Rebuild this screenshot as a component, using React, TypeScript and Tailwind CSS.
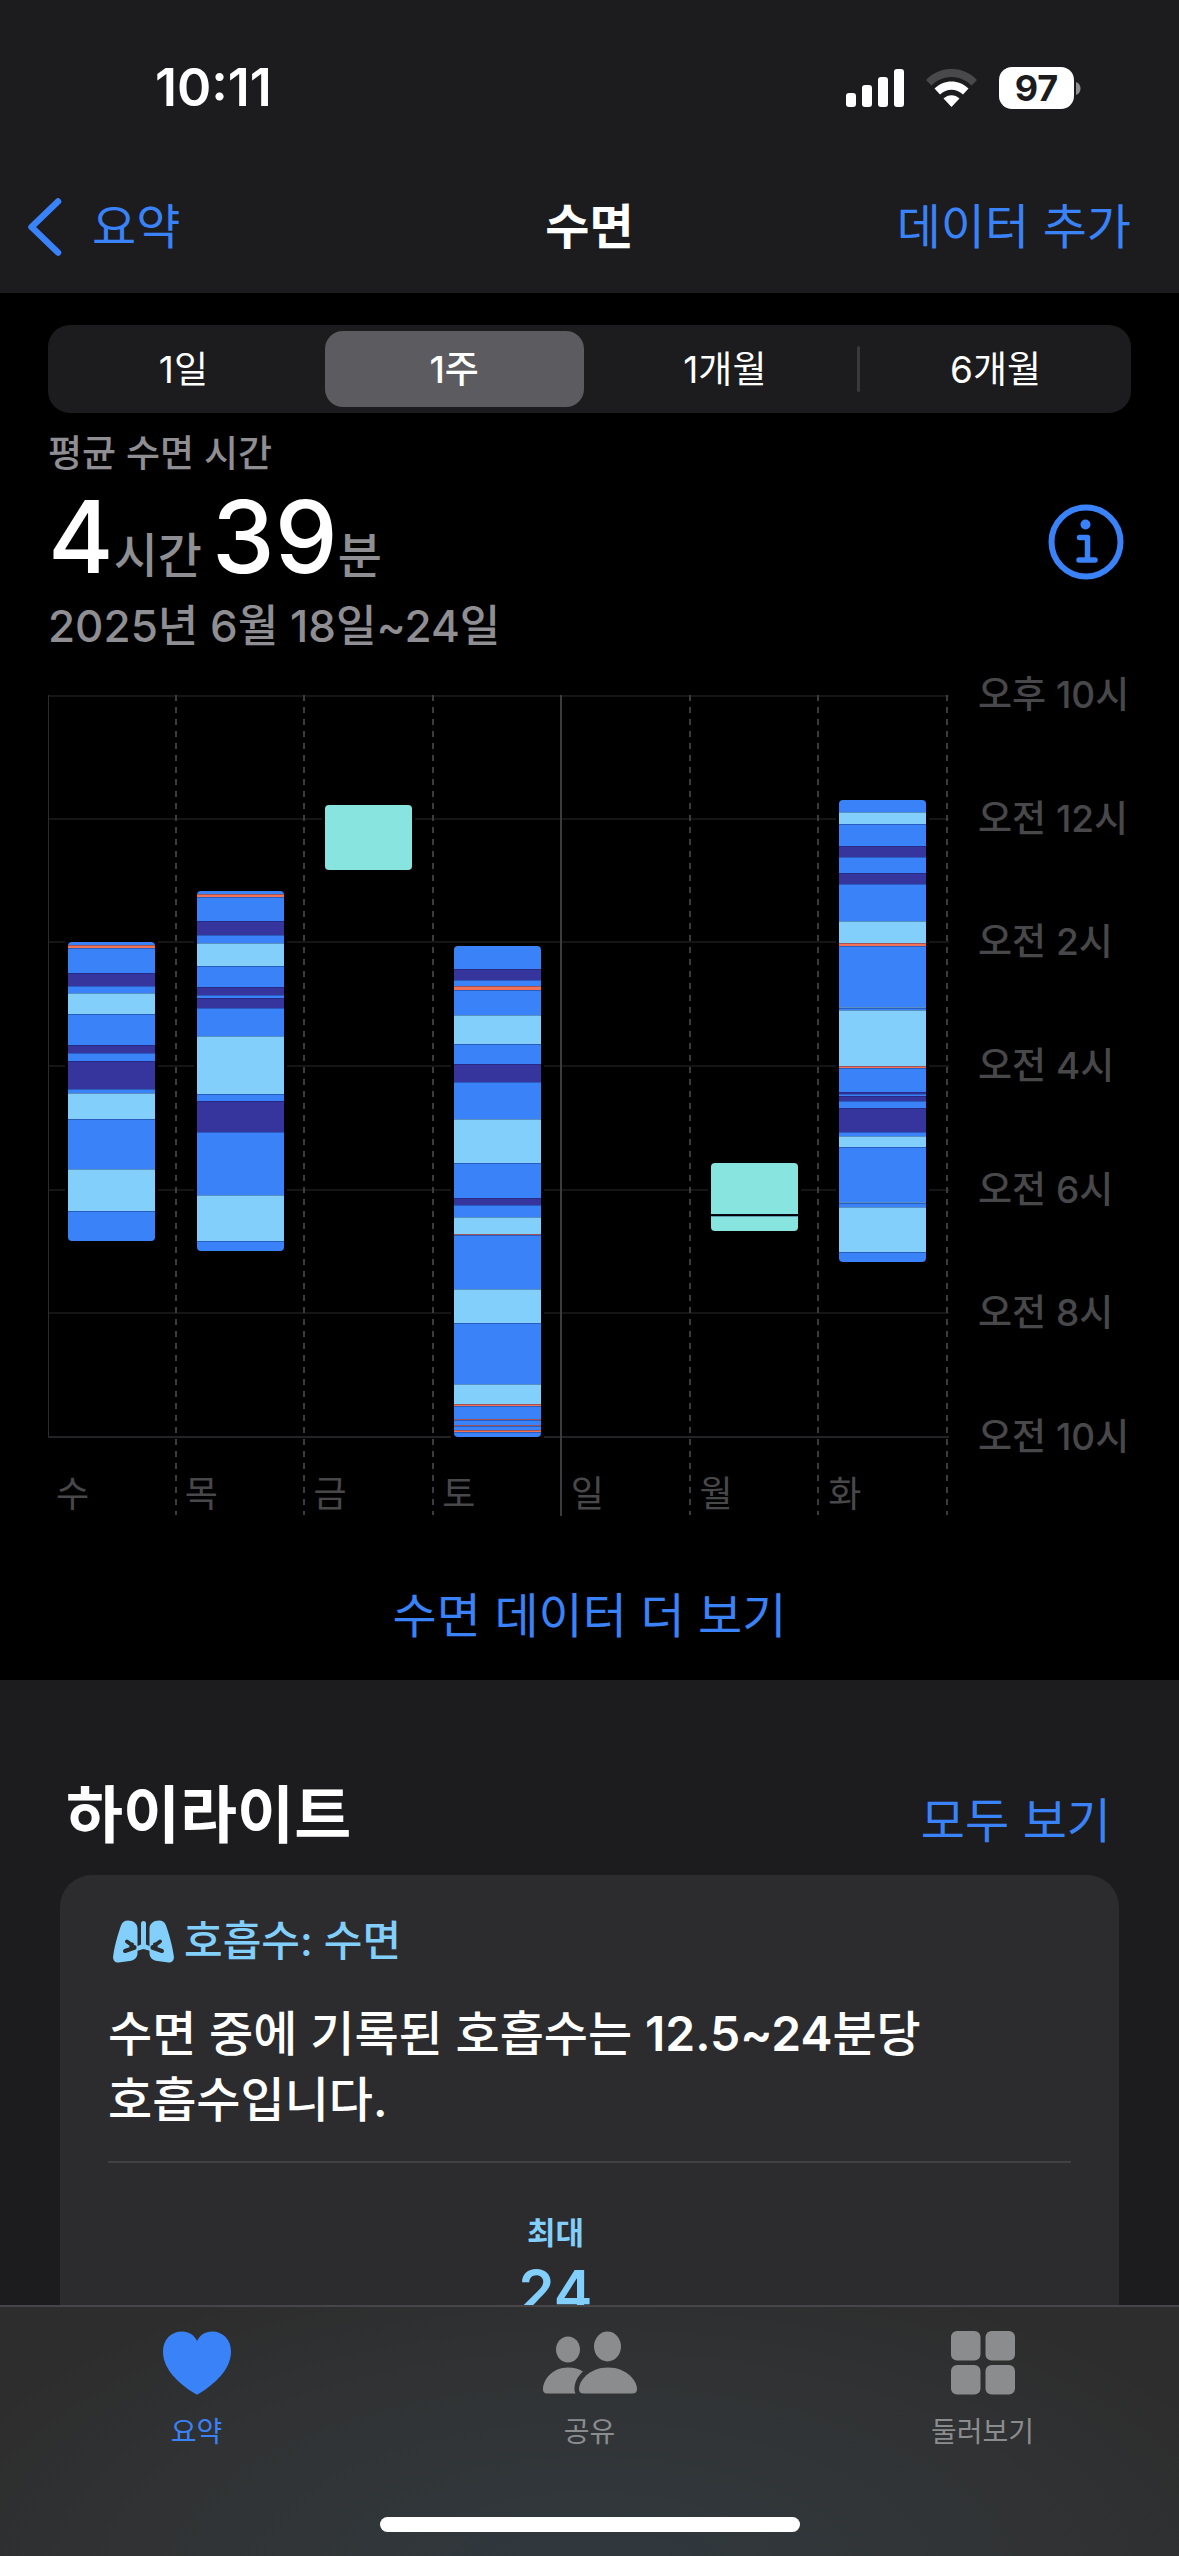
import { Fragment, useState } from "react";

type Stage = "core" | "deep" | "rem" | "awake" | "asleep" | "gap";

const STAGE_COLORS: Record<Stage, string> = {
  core: "#3a82f7",
  deep: "#36349d",
  rem: "#82cffb",
  awake: "#f27258",
  asleep: "#88e4df",
  gap: "#000000",
};

type Night = { day: string; start?: number; stages?: [Stage, number][] };

/* Each stage is followed by the chart position at which it ends. */
const NIGHTS: Night[] = [
  {
    day: "수",
    start: 247,
    stages: [
      ["core", 250], ["awake", 253], ["core", 278], ["deep", 291], ["core", 298],
      ["rem", 319], ["core", 350], ["deep", 358], ["core", 366], ["deep", 394],
      ["core", 398], ["rem", 424], ["core", 474], ["rem", 516], ["core", 546],
    ],
  },
  {
    day: "목",
    start: 196,
    stages: [
      ["core", 199], ["awake", 202], ["core", 226], ["deep", 240], ["core", 248],
      ["rem", 271], ["core", 292], ["deep", 300], ["core", 303], ["deep", 313],
      ["core", 341], ["rem", 399], ["core", 406], ["deep", 437], ["core", 500],
      ["rem", 546], ["core", 556],
    ],
  },
  { day: "금", start: 110, stages: [["asleep", 175]] },
  {
    day: "토",
    start: 251,
    stages: [
      ["core", 274], ["deep", 285], ["core", 291], ["awake", 295], ["core", 320],
      ["rem", 349], ["core", 369], ["deep", 387], ["core", 424], ["rem", 468],
      ["core", 503], ["deep", 510], ["core", 522], ["rem", 539], ["awake", 540],
      ["core", 594], ["rem", 628], ["core", 689], ["rem", 709], ["awake", 711],
      ["core", 724], ["awake", 725], ["core", 730], ["awake", 731], ["core", 735],
      ["awake", 737], ["core", 742],
    ],
  },
  { day: "일" },
  { day: "월", start: 468, stages: [["asleep", 519], ["gap", 521], ["asleep", 536]] },
  {
    day: "화",
    start: 105,
    stages: [
      ["core", 117], ["rem", 129], ["core", 151], ["deep", 162], ["core", 178],
      ["deep", 189], ["core", 226], ["rem", 248], ["awake", 251], ["core", 312],
      ["rem", 313], ["core", 315], ["rem", 371], ["awake", 373], ["core", 397],
      ["deep", 399], ["core", 401], ["deep", 406], ["core", 413], ["deep", 437],
      ["core", 441], ["rem", 452], ["core", 507], ["rem", 508], ["core", 512],
      ["rem", 557], ["core", 567],
    ],
  },
];

const HOURS = ["오후 10시", "오전 12시", "오전 2시", "오전 4시", "오전 6시", "오전 8시", "오전 10시"];
const RANGES = ["1일", "1주", "1개월", "6개월"];

const PLOT_W = 901;
const PLOT_H = 742;
const COL_W = 900 / 7;
const BAR_W = 87;

function StatusBar() {
  return (
    <div className="flex h-[160px] items-center justify-between pt-4 pr-[98px] pl-[155px]">
      <span className="text-[52px] leading-[60px] font-semibold text-white">10:11</span>
      <div className="flex items-center gap-[22px]">
        <svg className="h-[38px] w-[58px]" viewBox="0 0 58 38" fill="#fff" aria-label="신호">
          <rect x="0" y="24" width="10" height="14" rx="3" />
          <rect x="16" y="16" width="10" height="22" rx="3" />
          <rect x="32" y="8" width="10" height="30" rx="3" />
          <rect x="48" y="0" width="10" height="38" rx="3" />
        </svg>
        <svg className="h-[38px] w-[51px]" viewBox="0 0 51 38" aria-label="와이파이">
          <path d="M0 11C14-3.700 37-3.700 51 11L45.500 16.500C34.500 5 16.500 5 5.500 16.500Z" fill="#49494b" />
          <path d="M8.500 19.500C18 10 33 10 42.500 19.500L37 25.500C30.500 19 20.500 19 14 25.500Z" fill="#fff" />
          <path d="M17.500 29.500C22 25 29 25 33.500 29.500L25.500 38Z" fill="#fff" />
        </svg>
        <div className="flex items-center gap-[2px]">
          <span className="flex h-[42px] w-[75px] items-center justify-center rounded-[13px] bg-white text-[36px] leading-[42px] font-bold text-[#1c1c1e]">
            97
          </span>
          <svg className="h-[13px] w-[5px]" viewBox="0 0 5 13">
            <path d="M0 0C6 2 6 11 0 13Z" fill="#8e8e90" />
          </svg>
        </div>
      </div>
    </div>
  );
}

function NavBar() {
  return (
    <nav className="grid h-[133px] grid-cols-3 items-center px-[26px] text-[48px] leading-[64px]">
      <a href="#summary" className="flex items-center gap-[30px] text-[#3a82f7]">
        <svg className="h-[58px] w-[36px]" viewBox="0 0 36 58" fill="none">
          <path d="M32 3.500L5.500 29L32 54.500" stroke="currentColor" strokeWidth="6.500" strokeLinecap="round" strokeLinejoin="round" />
        </svg>
        요약
      </a>
      <h1 className="text-center font-semibold text-white">수면</h1>
      <button type="button" className="pr-[22px] text-right text-[#3a82f7]">데이터 추가</button>
    </nav>
  );
}

function RangePicker() {
  const [active, setActive] = useState(1);
  return (
    <div className="grid h-[88px] grid-cols-4 items-center rounded-[22px] bg-[#1c1c1e]" role="group" aria-label="기간">
      {RANGES.map((label, i) => (
        <div key={label} className="relative flex px-[6px]">
          <button
            type="button"
            aria-pressed={i === active}
            onClick={() => setActive(i)}
            className={
              i === active
                ? "h-[76px] flex-1 rounded-[18px] bg-[#5b5b60] pt-[2px] text-[37px] font-medium text-white"
                : "h-[76px] flex-1 rounded-[18px] pt-[2px] text-[37px] text-white"
            }
          >
            {label}
          </button>
          {i < 3 && i !== active && i + 1 !== active && (
            <span className="absolute top-[15px] right-0 h-[46px] w-[3px] rounded bg-[#39393c]" />
          )}
        </div>
      ))}
    </div>
  );
}

function InfoIcon() {
  return (
    <svg className="size-[76px]" viewBox="0 0 76 76" fill="none" aria-hidden="true">
      <circle cx="38" cy="38" r="34.500" stroke="#3a82f7" strokeWidth="6" />
      <circle cx="37.500" cy="20.500" r="5" fill="#3a82f7" />
      <path d="M31.500 33.500H39.500V56M31 56H47" stroke="#3a82f7" strokeWidth="5.500" strokeLinecap="round" strokeLinejoin="round" />
    </svg>
  );
}

function Summary() {
  return (
    <div className="flex items-center justify-between pt-4 pr-[7px]">
      <div>
        <p className="text-[37px] leading-[50px] font-medium text-[#8e8e93]">평균 수면 시간</p>
        <p className="mt-[13px] flex items-baseline text-[48px] leading-[48px] font-medium text-[#8e8e93]">
          <span className="text-[100px] leading-[90px] text-white">4</span>
          시간
          <span className="ml-[10px] text-[100px] leading-[90px] text-white">39</span>
          분
        </p>
        <p className="mt-4 text-[44px] leading-[56px] font-medium text-[#8e8e93]">2025년 6월 18일~24일</p>
      </div>
      <button type="button" aria-label="정보">
        <InfoIcon />
      </button>
    </div>
  );
}

function NightBar({ night, index }: { night: Night; index: number }) {
  if (!night.stages || night.start === undefined) return null;
  const x = Math.round(index * COL_W) + 20;
  const start = night.start;
  const end = night.stages[night.stages.length - 1][1];
  return (
    <g>
      <clipPath id={`night-${index}`}>
        <rect x={x} y={start} width={BAR_W} height={end - start} rx="4" />
      </clipPath>
      <rect x={x - 3} y={start - 3} width={BAR_W + 6} height={end - start + 5} fill="#000" />
      <g clipPath={`url(#night-${index})`}>
        {night.stages.map(([stage, to], i) => {
          const from = i === 0 ? start : night.stages![i - 1][1];
          return (
            <Fragment key={to}>
              <rect x={x} y={from} width={BAR_W} height={to - from} fill={STAGE_COLORS[stage]} />
              {i > 0 && <rect x={x} y={from} width={BAR_W} height="1" fill="#0b1a55" fillOpacity="0.35" />}
            </Fragment>
          );
        })}
      </g>
    </g>
  );
}

function SleepChart() {
  return (
    <div className="mt-[41px] flex items-start gap-[29px]">
      <div className="relative w-[901px] shrink">
        <svg className="block h-auto w-full" viewBox={`0 0 ${PLOT_W} 821`} role="img" aria-label="수면 차트">
          {HOURS.map((_, i) => (
            <rect key={i} x="0" y={Math.max(0, Math.round((i * PLOT_H) / 6) - 1)} width="901" height="2" fill={i === 6 ? "#232325" : "#151516"} />
          ))}
          <rect x="0" y="0" width="1" height="742" fill="#2c2c2e" />
          {NIGHTS.map((night, i) => {
            const x = Math.round((i + 1) * COL_W) - 1;
            return i === 3 ? (
              <rect key={night.day} x={x - 1} y="0" width="2" height="821" fill="#3c3c3e" />
            ) : (
              <path key={night.day} d={`M${x} 0V820`} stroke="#3c3c3e" strokeWidth="2" strokeDasharray="6 6" />
            );
          })}
          {NIGHTS.map((night, i) => (
            <NightBar key={night.day} night={night} index={i} />
          ))}
        </svg>
        <div className="absolute inset-x-0 bottom-0 grid grid-cols-7 text-[36px] leading-[44px] text-[#48484a]">
          {NIGHTS.map((night) => (
            <span key={night.day} className="pl-2">{night.day}</span>
          ))}
        </div>
      </div>
      <ul className="-mt-5 flex h-[782px] shrink-0 flex-col justify-between text-[37px] leading-[40px] font-medium whitespace-nowrap text-[#48484a]">
        {HOURS.map((hour) => (
          <li key={hour}>{hour}</li>
        ))}
      </ul>
    </div>
  );
}

function LungsIcon() {
  return (
    <svg className="h-[43px] w-[61px]" viewBox="0 0 61 43" aria-hidden="true">
      <path d="M15 0.500C20.500 0.500 24.500 3.500 24.500 9V33C24.500 38 21 40.500 16.500 41L5.500 42.500C2 43-0.500 40 0.200 36C1.500 26 5 14 8 5.500C9.200 2.200 11.500 0.500 15 0.500Z" fill="#82cffb" />
      <path d="M46 0.500C40.500 0.500 36.500 3.500 36.500 9V33C36.500 38 40 40.500 44.500 41L55.500 42.500C59 43 61.500 40 60.800 36C59.500 26 56 14 53 5.500C51.800 2.200 49.500 0.500 46 0.500Z" fill="#82cffb" />
      <path d="M14 21.500L22 27.500L12 31M19 24.500L18 28.500M47 21.500L39 27.500L49 31M42 24.500L43 28.500" fill="none" stroke="#2c2c2e" strokeWidth="4" strokeLinecap="round" strokeLinejoin="round" />
      <path d="M28 3.500a2.500 2.500 0 0 1 5 0V24.500L37.500 26.500V31L30.500 29L23.500 31V26.500L28 24.500Z" fill="#82cffb" />
    </svg>
  );
}

function Highlights() {
  return (
    <section className="flex-1 bg-[#1c1c1e] px-[60px] pt-[91px]">
      <div className="flex items-baseline justify-between pr-2 pl-[6px]">
        <h2 className="text-[62px] leading-[90px] font-bold text-white">하이라이트</h2>
        <a href="#all" className="text-[48px] leading-[64px] text-[#3a82f7]">모두 보기</a>
      </div>
      <article className="mt-[14px] rounded-t-[32px] bg-[#2c2c2e] px-12 pt-9 pb-64">
        <div className="flex items-center gap-[10px] pl-[5px]">
          <LungsIcon />
          <h3 className="text-[42px] leading-[60px] font-medium text-[#82cffb]">호흡수: 수면</h3>
        </div>
        <p className="mt-[30px] text-[48px] leading-[66px] font-medium text-white">
          수면 중에 기록된 호흡수는 <span className="font-semibold">12.5~24</span>분당
          <br />
          호흡수입니다.
        </p>
        <div className="mt-[28px] border-t-2 border-[#414144] pt-[46px] pr-[68px] text-center text-[#82cffb]">
          <p className="text-[31px] leading-[48px] font-bold">최대</p>
          <p className="text-[58px] leading-[68px] font-semibold">24</p>
        </div>
      </article>
    </section>
  );
}

function HeartIcon() {
  return (
    <svg className="h-[64px] w-[68px]" viewBox="0 0 68 64" fill="currentColor" aria-hidden="true">
      <path d="M34 63.500C33 63.500 31 62 28.500 60.500C12 49.500 0 36 0 20.500C0 8.500 8 0.500 19 0.500C26 0.500 31 4 34 10C37 4 42 0.500 49 0.500C60 0.500 68 8.500 68 20.500C68 36 56 49.500 39.500 60.500C37 62 35 63.500 34 63.500Z" />
    </svg>
  );
}

function PeopleIcon() {
  return (
    <svg className="h-[64px] w-[94px]" viewBox="0 0 94 64" fill="currentColor" aria-hidden="true">
      <ellipse cx="25" cy="18.500" rx="12" ry="13" />
      <ellipse cx="64.500" cy="15.500" rx="13.500" ry="15" />
      <path d="M25 36.500C31 36.500 36 38 40 40.500C34 46 31.500 52 31.500 58C31.500 60 32 61.500 32.500 62.500H4C1.500 62.500 0 61 0 58.500C0 49 9 36.500 25 36.500Z" />
      <path d="M65 36.500C84 36.500 94 50 94 58C94 61 92.500 62.500 89 62.500H41C37.500 62.500 36 61 36 58C36 50 46 36.500 65 36.500Z" />
    </svg>
  );
}

function GridIcon() {
  return (
    <svg className="size-[64px]" viewBox="0 0 64 64" fill="currentColor" aria-hidden="true">
      <rect x="0" y="0" width="29.500" height="29.500" rx="6" />
      <rect x="34.500" y="0" width="29.500" height="29.500" rx="6" />
      <rect x="0" y="34" width="29.500" height="29.500" rx="6" />
      <rect x="34.500" y="34" width="29.500" height="29.500" rx="6" />
    </svg>
  );
}

const TABS = [
  { label: "요약", icon: <HeartIcon />, active: true },
  { label: "공유", icon: <PeopleIcon />, active: false },
  { label: "둘러보기", icon: <GridIcon />, active: false },
];

function TabBar() {
  return (
    <footer className="fixed inset-x-0 bottom-0 h-[251px] border-t-2 border-[#464648] bg-[#303132] bg-[radial-gradient(ellipse_at_50%_110%,#30393f_0%,#313436_45%,#2d2d2d_85%)]">
      <nav className="grid grid-cols-3 pt-6">
        {TABS.map((tab) => (
          <a
            key={tab.label}
            href={`#${tab.label}`}
            className={
              tab.active
                ? "flex flex-col items-center gap-[17px] text-[#3a82f7]"
                : "flex flex-col items-center gap-[17px] text-[#8b8c8e]"
            }
          >
            {tab.icon}
            <span className="text-[28px] leading-[40px]">{tab.label}</span>
          </a>
        ))}
      </nav>
      <div className="mx-auto mt-[65px] h-[15px] w-[420px] rounded-full bg-white" />
    </footer>
  );
}

export default function App() {
  return (
    <div className="flex h-screen flex-col overflow-hidden bg-black font-['Inter','Noto_Sans_CJK_KR',sans-serif]">
      <header className="bg-[#1c1c1e]">
        <StatusBar />
        <NavBar />
      </header>
      <main className="flex flex-1 flex-col">
        <section className="bg-black px-12 pt-8">
          <RangePicker />
          <Summary />
          <SleepChart />
          <div className="flex justify-center pt-[68px] pb-8">
            <a href="#more" className="text-[48px] leading-[64px] text-[#3a82f7]">수면 데이터 더 보기</a>
          </div>
        </section>
        <Highlights />
      </main>
      <TabBar />
    </div>
  );
}
